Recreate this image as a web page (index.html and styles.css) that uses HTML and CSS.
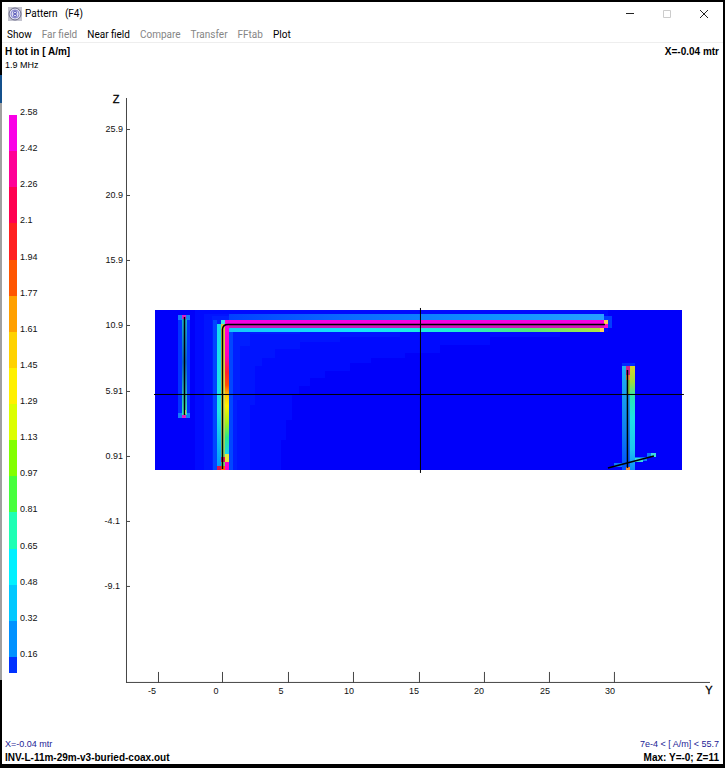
FILE: index.html
```html
<!DOCTYPE html>
<html lang="en">
<head>
<meta charset="utf-8">
<title>Pattern (F4)</title>
<link rel="stylesheet" href="styles.css">
</head>
<body>
<div class="window">
  <header class="titlebar">
    <svg class="app-icon" viewBox="0 0 14 14" aria-hidden="true">
      <rect width="14" height="14" fill="#c4c4d0"/>
      <circle cx="7" cy="7" r="6" fill="#dcdcf0" stroke="#6b6b88"/>
      <circle cx="7" cy="7" r="4" fill="none" stroke="#8c8cd0"/>
      <ellipse cx="7" cy="5.500" rx="1.500" ry="1.500" fill="none" stroke="#5050b4"/>
      <ellipse cx="7" cy="8.500" rx="1.500" ry="1.500" fill="none" stroke="#5050b4"/>
    </svg>
    <h1 class="title">Pattern &nbsp; (F4)</h1>
    <div class="controls">
      <button type="button" aria-label="Minimize"><svg viewBox="0 0 10 10"><path d="M1 4.500H9" stroke="#222"/></svg></button>
      <button type="button" aria-label="Maximize" disabled><svg viewBox="0 0 10 10"><path d="M1.500 1.500H8.500V8.500H1.500Z" fill="none" stroke="#ccc"/></svg></button>
      <button type="button" aria-label="Close"><svg viewBox="0 0 10 10"><path d="M1 1L9 9M9 1L1 9" stroke="#222"/></svg></button>
    </div>
  </header>
  <nav class="menu">
    <button type="button">Show</button>
    <button type="button" disabled>Far field</button>
    <button type="button">Near field</button>
    <button type="button" disabled>Compare</button>
    <button type="button" disabled>Transfer</button>
    <button type="button" disabled>FFtab</button>
    <button type="button">Plot</button>
  </nav>
  <div class="info">
    <div><b>H tot in [ A/m]</b><br><span class="small">1.9 MHz</span></div>
    <b>X=-0.04 mtr</b>
  </div>
  <main class="content">
    <ol class="legend">
      <li class="c1"><span>2.58</span></li>
      <li class="c2"><span>2.42</span></li>
      <li class="c3"><span>2.26</span></li>
      <li class="c4"><span>2.1</span></li>
      <li class="c5"><span>1.94</span></li>
      <li class="c6"><span>1.77</span></li>
      <li class="c7"><span>1.61</span></li>
      <li class="c8"><span>1.45</span></li>
      <li class="c9"><span>1.29</span></li>
      <li class="c10"><span>1.13</span></li>
      <li class="c11"><span>0.97</span></li>
      <li class="c12"><span>0.81</span></li>
      <li class="c13"><span>0.65</span></li>
      <li class="c14"><span>0.48</span></li>
      <li class="c15"><span>0.32</span></li>
      <li class="c16"><span>0.16</span></li>
    </ol>
    <svg class="plot" viewBox="100 90 623 610" role="img" aria-label="Magnetic near field over Y and Z">
      <defs>
        <linearGradient id="mast" x1="0" y1="0" x2="0" y2="1">
          <stop offset="0" stop-color="#ff00dc"/><stop offset=".22" stop-color="#ff00b4"/>
          <stop offset=".33" stop-color="#ff1e32"/><stop offset=".42" stop-color="#ff5000"/>
          <stop offset=".49" stop-color="#ffc800"/><stop offset=".56" stop-color="#fff000"/>
          <stop offset=".68" stop-color="#a0f01e"/><stop offset=".78" stop-color="#28e68c"/>
          <stop offset=".9" stop-color="#1ed2f0"/>
        </linearGradient>
        <linearGradient id="mast-left" x1="0" y1="0" x2="0" y2="1">
          <stop offset="0" stop-color="#14dcf0"/><stop offset=".6" stop-color="#1ee6e6"/><stop offset="1" stop-color="#0096ff"/>
        </linearGradient>
        <linearGradient id="mast-core" x1="0" y1="0" x2="0" y2="1">
          <stop offset="0" stop-color="#d2c83c"/><stop offset=".55" stop-color="#dcdc50"/><stop offset="1" stop-color="#64d278"/>
        </linearGradient>
        <linearGradient id="under" x1="0" y1="0" x2="1" y2="0">
          <stop offset="0" stop-color="#14c8fa"/><stop offset=".35" stop-color="#14e6fa"/>
          <stop offset=".6" stop-color="#1ef0d2"/><stop offset=".8" stop-color="#50eb78"/><stop offset="1" stop-color="#b4e63c"/>
        </linearGradient>
        <linearGradient id="over" x1="0" y1="0" x2="1" y2="0">
          <stop offset="0" stop-color="#0041ff"/><stop offset=".3" stop-color="#0a69ff"/><stop offset=".7" stop-color="#0f91ff"/><stop offset="1" stop-color="#28a0ff"/>
        </linearGradient>
        <linearGradient id="right-mast" x1="0" y1="0" x2="0" y2="1">
          <stop offset="0" stop-color="#dcd228"/><stop offset=".15" stop-color="#a0dc3c"/>
          <stop offset=".3" stop-color="#28e6b4"/><stop offset=".5" stop-color="#1ee1e6"/><stop offset=".8" stop-color="#1ec8f0"/><stop offset="1" stop-color="#0f8cfa"/>
        </linearGradient>
        <linearGradient id="right-left" x1="0" y1="0" x2="0" y2="1">
          <stop offset="0" stop-color="#1eb4f0"/><stop offset=".6" stop-color="#0f82f0"/><stop offset="1" stop-color="#0050ff"/>
        </linearGradient>
        <linearGradient id="short-mast" x1="0" y1="0" x2="0" y2="1">
          <stop offset="0" stop-color="#1eaac8"/><stop offset=".45" stop-color="#0a64c8"/><stop offset="1" stop-color="#3ce6b4"/>
        </linearGradient>
      </defs>

      <g shape-rendering="crispEdges">
        <path fill="#0000fa" d="M155 310H682V470H155Z"/>
        <path fill="#000aff" d="M195 310H608V332H560V337H490V345H440V353H405V358H371V363H350V371H325V378H310V386H299V395H292V420H286V440H281V470H195Z"/>
        <path fill="#0014ff" d="M204 314H400V337H340V342H300V349H275V358H262V366H255V405H250V470H204Z"/>
        <path fill="#001eff" d="M212 316H300V334H250V346H240V400H237V470H212Z"/>
        <path fill="#0046ff" d="M213 320H217V470H213ZM229 332H233V470H229Z"/>

        <path fill="#0032ff" d="M178 319H190V413H178Z"/>
        <path fill="#147dfa" d="M178 315H190V320H178ZM178 413H190V418H178Z"/>
        <path fill="url(#short-mast)" d="M182 319H187V415H182Z"/>
        <path fill="#dc1ec8" d="M182 315H186V319H182ZM182 415H186V418H182Z"/>
        <path fill="#ffe682" d="M184 410H186V414H184Z"/>

        <path fill="url(#over)" d="M229 314H604V320H229Z"/>
        <path fill="#f500e1" d="M225 320H604V324H225Z"/>
        <path fill="#d214be" d="M225 324H604V328H225Z"/>
        <path fill="#fa0ad2" d="M604 324H608V328H604Z"/>
        <path fill="url(#under)" d="M229 328H604V332H229Z"/>
        <path fill="#ffd250" d="M604 320H608V324H604ZM600 328H604V332H600Z"/>
        <path fill="#003cff" d="M604 316H612V320H604ZM608 320H612V328H608Z"/>

        <path fill="url(#mast-left)" d="M217 324H221V470H217Z"/>
        <path fill="url(#mast-core)" d="M221 324H225V470H221Z"/>
        <path fill="url(#mast)" d="M225 324H229V470H225Z"/>
        <path fill="#3ce6e6" d="M221 320H225V324H221Z"/>
        <path fill="#e6e63c" d="M225 454H229V462H225Z"/>
        <path fill="#dc1450" d="M217 466H221V470H217ZM221 457H225V462H221Z"/>
        <path fill="#ff00c8" d="M225 462H229V470H225Z"/>
        <path fill="#ff6400" d="M221 466H225V470H221Z"/>

        <path fill="#0028ff" d="M622 363H635V366H622Z"/>
        <path fill="url(#right-left)" d="M622 366H626V470H622Z"/>
        <path fill="url(#right-left)" d="M626 366H630V470H626Z"/>
        <path fill="url(#right-mast)" d="M630 366H635V470H630Z"/>
        <path fill="#d21e8c" d="M626 366H630V375H626Z"/>
        <path fill="#f08c3c" d="M626 375H630V380H626ZM626 467H630V470H626Z"/>
        <path fill="#78c83c" d="M628 380H630V394H628Z"/>
        <path fill="#0a78ff" d="M614 463H622V467H614ZM635 457H647V461H635ZM647 453H651V457H647Z"/>
        <path fill="#3cdcdc" d="M635 458H643V462H635ZM651 453H656V457H651Z"/>
      </g>

      <g class="wire">
        <path d="M184.500 317V415"/>
        <path d="M222.500 469V329Q223 324.500 228 324.500H605"/>
        <path d="M627.500 370V468"/>
        <path d="M608 468L654 456"/>
      </g>
      <g class="cross"><path d="M154 394.500H684M420.500 308V473"/></g>

      <path class="axis" d="M126.500 98V683M126 682.500H710M127 129.500H130M127 195.500H130M127 260.500H130M127 325.500H130M127 391.500H130M127 456.500H130M127 521.500H130M127 586.500H130M158.500 672V683M222.500 672V683M288.500 672V683M353.500 672V683M419.500 672V683M484.500 672V683M549.500 672V683M614.500 672V683"/>
      <g class="tick z">
        <text x="123" y="132">25.9</text>
        <text x="123" y="198">20.9</text>
        <text x="123" y="263">15.9</text>
        <text x="123" y="328">10.9</text>
        <text x="123" y="394">5.91</text>
        <text x="123" y="459">0.91</text>
        <text x="120" y="524">-4.1</text>
        <text x="120" y="589">-9.1</text>
      </g>
      <g class="tick y">
        <text x="152" y="694">-5</text>
        <text x="216" y="694">0</text>
        <text x="281" y="694">5</text>
        <text x="349" y="694">10</text>
        <text x="414" y="694">15</text>
        <text x="479" y="694">20</text>
        <text x="545" y="694">25</text>
        <text x="610" y="694">30</text>
      </g>
      <g class="axis-name">
        <text x="116" y="103">Z</text>
        <text x="709" y="694">Y</text>
      </g>
    </svg>
  </main>
  <footer class="status">
    <div><span class="blue">X=-0.04 mtr</span><br><b>INV-L-11m-29m-v3-buried-coax.out</b></div>
    <div class="right"><span class="blue">7e-4 &lt; [ A/m] &lt; 55.7</span><br><b>Max: Y=-0; Z=11</b></div>
  </footer>
</div>
</body>
</html>
```
FILE: styles.css
```css
* { box-sizing: border-box; }

body {
  margin: 0;
  min-height: 100vh;
  padding: 2px 2px 4px;
  display: flex;
  background: #000 linear-gradient(#000 75px, #14508c 75px, #14508c 103px, #a0a0a0 103px, #a0a0a0 680px, #000 680px) no-repeat left top / 2px 100%;
  font: 10px/13px "Liberation Sans", Arial, sans-serif;
  color: #000;
}

.window {
  flex: 1;
  min-width: 0;
  display: flex;
  flex-direction: column;
  background: #fff;
}

button {
  margin: 0;
  padding: 0;
  border: 0;
  background: none;
  font: inherit;
  color: inherit;
}

button:disabled { color: #858585; }

.titlebar {
  display: flex;
  align-items: center;
  gap: 3px;
  height: 24px;
  padding: 0 14px 0 6px;
  font: 10px/14px Roboto, "Open Sans", sans-serif;
}

.app-icon { width: 14px; height: 14px; }

.title {
  flex: 1;
  margin: 0;
  font-size: 10px;
  font-weight: 400;
}

.controls { display: flex; gap: 27px; }
.controls button { width: 10px; height: 10px; }
.controls svg { display: block; width: 10px; height: 10px; }

.menu {
  display: flex;
  gap: 10px;
  height: 17px;
  padding: 1px 5px 0;
  border-bottom: 1px solid #eee;
  font: 10px/14px Roboto, "Open Sans", sans-serif;
}

.info, .status {
  display: flex;
  justify-content: space-between;
  padding: 2px 4px 0 3px;
}

.right { text-align: right; }
.small, .blue, .legend { font-size: 9px; }
.blue { color: #1c1c96; }

.content {
  flex: 1;
  min-height: 0;
  display: flex;
  justify-content: space-between;
  align-items: flex-start;
  padding-top: 18px;
}

.legend {
  flex: none;
  display: flex;
  flex-direction: column;
  height: 558px;
  margin: 25px 0 0 7px;
  padding: 0;
  list-style: none;
}

.legend li {
  flex: 36;
  display: flex;
  border-left-width: 8px;
  border-left-style: solid;
}

.legend .c16 { flex: 16; }

.legend span {
  height: 13px;
  margin: -9px 0 0 3px;
  color: #111;
}

.c1 { border-color: #fa00e6; }
.c2 { border-color: #ff0096; }
.c3 { border-color: #ff0050; }
.c4 { border-color: #ff2020; }
.c5 { border-color: #ff5500; }
.c6 { border-color: #ffa000; }
.c7 { border-color: #ffd200; }
.c8 { border-color: #fff000; }
.c9 { border-color: #dcff00; }
.c10 { border-color: #82ff00; }
.c11 { border-color: #46ff3c; }
.c12 { border-color: #1effb4; }
.c13 { border-color: #00f0ff; }
.c14 { border-color: #00c8ff; }
.c15 { border-color: #0091ff; }
.c16 { border-color: #0032ff; }

.plot {
  width: 86.4%;
  height: auto;
  overflow: visible;
}

.tick { font-size: 9px; fill: #111; }
.z { text-anchor: end; }
.y { text-anchor: middle; }
.axis-name { font-size: 11px; text-anchor: middle; stroke: #000; stroke-width: 0.3; }
.axis { fill: none; stroke: #444; }
.wire { fill: none; stroke: #000; stroke-width: 1.5; }
.cross { fill: none; stroke: #000; }

.status { padding: 0 4px 0 3px; }
```
